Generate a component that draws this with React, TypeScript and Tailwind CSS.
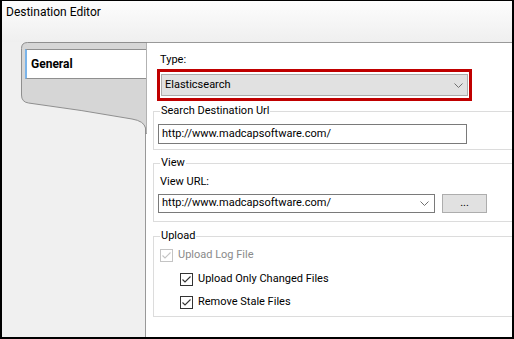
import React from "react";

const font = { fontFamily: "Roboto, 'Liberation Sans', sans-serif" };

function Chevron() {
    return (
        <svg width="9" height="5" viewBox="0 0 9 5" className="shrink-0">
            <path d="M0.5 0.5 L4.5 4.5 L8.5 0.5" fill="none" stroke="#707070" strokeWidth="1" />
        </svg>
    );
}

function CheckBox({ disabled }: { disabled?: boolean }) {
    const c = disabled ? "#c4c4c4" : "#333333";
    return (
        <svg width="13" height="13" viewBox="0 0 13 13" className="shrink-0">
            <rect x="0.5" y="0.5" width="12" height="12" fill="white" stroke={c} />
            <path d="M2.5 6.5 L5 9 L10.5 3.5" fill="none" stroke={c} strokeWidth="1.1" />
        </svg>
    );
}

function TabShape() {
    return (
        <svg width="145" height="92" viewBox="0 0 145 92" className="absolute left-0 top-0">
            <path
                d="M145 0.5 H25.5 Q19.5 0.5 19.5 6.5 V53 Q19.5 60 26.5 61 Q80 68 130 77 Q142 79 143.5 86 V92 H145 Z"
                fill="#d6d6d6"
                stroke="#8f8f8f"
                strokeWidth="1"
            />
        </svg>
    );
}

export default function App() {
    return (
        <div
            className="w-[514px] h-[339px] flex flex-col overflow-hidden border-black border-t border-x-2 border-b-2 bg-white text-[11px] text-black"
            style={font}
        >
            <div className="h-[41px] shrink-0 bg-gradient-to-b from-[#fdfdfd] to-[#efefef] pl-[4px] pt-[3px] text-[12px] leading-[16px]">
                Destination Editor
            </div>

            <div className="flex flex-1 min-h-0">
                {/* left tab strip */}
                <div className="relative w-[143px] shrink-0 bg-[#f0f0f0]">
                    <TabShape />
                    <div className="relative z-10 ml-[23px] mt-[7px] w-[121px] h-[30px] bg-white border-y border-[#8f8f8f] border-l-2 border-l-[#7ab4ea] flex items-center pl-[4px] font-bold text-[12px]">
                        General
                    </div>
                </div>

                {/* content */}
                <div className="w-[367px] shrink-0 bg-white border-l border-t border-[#999999] flex flex-col overflow-hidden">
                    <div className="ml-[14px] mt-[9px] leading-[16px]">Type:</div>
                    <div className="ml-[11px] mt-[1px] w-[315px] h-[32px] border-[3px] border-[#c00000] px-[1px] py-[2px]">
                        <div className="h-[22px] bg-[#e1e1e1] border border-[#adadad] flex items-center justify-between pl-[3px] pr-[4px]">
                            <span>Elasticsearch</span>
                            <Chevron />
                        </div>
                    </div>

                    <fieldset className="ml-[7px] mt-[2px] w-[420px] shrink-0 border border-[#dcdcdc] px-[4px] pb-[5px]">
                        <legend className="ml-[2px] px-[1px] leading-[16px]">Search Destination Url</legend>
                        <div className="mt-[5px] w-[309px] h-[20px] border border-[#7a7a7a] flex items-center pl-[3px]">
                            http://www.madcapsoftware.com/
                        </div>
                    </fieldset>

                    <fieldset className="ml-[7px] mt-[5px] w-[420px] shrink-0 border border-[#dcdcdc] px-[4px] pb-[8px]">
                        <legend className="ml-[2px] px-[1px] leading-[16px]">View</legend>
                        <div className="mt-[3px] ml-[2px] leading-[16px]">View URL:</div>
                        <div className="mt-[4px] flex items-center gap-[7px]">
                            <div className="w-[277px] h-[19px] border border-[#7a7a7a] flex items-center justify-between pl-[3px] pr-[5px]">
                                <span>http://www.madcapsoftware.com/</span>
                                <Chevron />
                            </div>
                            <div className="w-[45px] h-[19px] bg-[#e1e1e1] border border-[#adadad] flex items-center justify-center">
                                ...
                            </div>
                        </div>
                    </fieldset>

                    <fieldset className="ml-[7px] mt-[6px] w-[420px] shrink-0 border border-[#dcdcdc] px-[4px] pb-[6px]">
                        <legend className="ml-[2px] px-[1px] leading-[16px]">Upload</legend>
                        <div className="mt-[3px] ml-[2px] h-[16px] flex items-center gap-[5px] text-[#8a8a8a]">
                            <CheckBox disabled />
                            <span>Upload Log File</span>
                        </div>
                        <div className="mt-[8px] ml-[22px] h-[16px] flex items-center gap-[5px]">
                            <CheckBox />
                            <span>Upload Only Changed Files</span>
                        </div>
                        <div className="mt-[7px] ml-[22px] h-[16px] flex items-center gap-[5px]">
                            <CheckBox />
                            <span>Remove Stale Files</span>
                        </div>
                    </fieldset>
                </div>
            </div>
        </div>
    );
}
